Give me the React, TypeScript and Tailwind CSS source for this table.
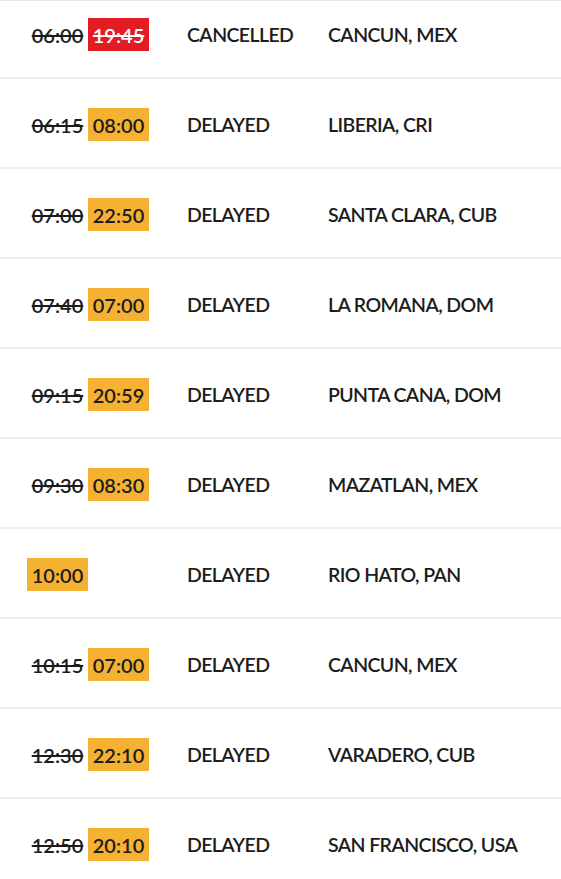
import React from "react";

type Flight = {
  scheduled?: string;
  actual: string;
  status: "CANCELLED" | "DELAYED";
  destination: string;
};

const flights: Flight[] = [
  { scheduled: "06:00", actual: "19:45", status: "CANCELLED", destination: "CANCUN, MEX" },
  { scheduled: "06:15", actual: "08:00", status: "DELAYED", destination: "LIBERIA, CRI" },
  { scheduled: "07:00", actual: "22:50", status: "DELAYED", destination: "SANTA CLARA, CUB" },
  { scheduled: "07:40", actual: "07:00", status: "DELAYED", destination: "LA ROMANA, DOM" },
  { scheduled: "09:15", actual: "20:59", status: "DELAYED", destination: "PUNTA CANA, DOM" },
  { scheduled: "09:30", actual: "08:30", status: "DELAYED", destination: "MAZATLAN, MEX" },
  { actual: "10:00", status: "DELAYED", destination: "RIO HATO, PAN" },
  { scheduled: "10:15", actual: "07:00", status: "DELAYED", destination: "CANCUN, MEX" },
  { scheduled: "12:30", actual: "22:10", status: "DELAYED", destination: "VARADERO, CUB" },
  { scheduled: "12:50", actual: "20:10", status: "DELAYED", destination: "SAN FRANCISCO, USA" },
];

const FlightRow = ({ flight }: { flight: Flight }) => {
  const cancelled = flight.status === "CANCELLED";
  return (
    <div className="h-[90px] pt-[2px] border-b-2 border-[#efefef] flex items-center pl-[27px]">
      <div className="w-[160px] flex items-center text-[20px]">
        {flight.scheduled && (
          <span className="w-[61px] pt-[2px] text-center line-through decoration-[1.5px]">
            {flight.scheduled}
          </span>
        )}
        <span
          className={`w-[61px] h-[33px] pt-[2px] flex items-center justify-center ${
            cancelled
              ? "bg-[#e31b23] text-white line-through decoration-[1.5px]"
              : "bg-[#f4b132] text-[#1c1c1c]"
          }`}
        >
          {flight.actual}
        </span>
      </div>
      <div className="w-[141px] pt-[2px] tracking-[-0.6px]">{flight.status}</div>
      <div className="flex-1 pt-[2px] tracking-[-0.6px]">{flight.destination}</div>
    </div>
  );
};

export default function App() {
  return (
    <div
      className="w-[561px] h-[879px] overflow-hidden bg-white text-[#1c1c1c] text-[19.5px] font-semibold border-t border-[#e6e6e6]"
      style={{ fontFamily: "Lato, 'Open Sans', sans-serif" }}
    >
      <div className="-mt-[12px]">
        {flights.map((f, i) => (
          <FlightRow key={i} flight={f} />
        ))}
      </div>
    </div>
  );
}
